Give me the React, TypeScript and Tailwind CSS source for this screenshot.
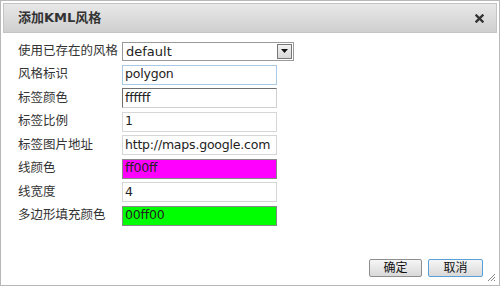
const rows: { label: string; value: string; kind: string }[] = [
  { label: '风格标识', value: 'polygon', kind: 'focus' },
  { label: '标签颜色', value: 'ffffff', kind: 'inset' },
  { label: '标签比例', value: '1', kind: 'plain' },
  { label: '标签图片地址', value: 'http://maps.google.com', kind: 'plain' },
  { label: '线颜色', value: 'ff00ff', kind: 'magenta' },
  { label: '线宽度', value: '4', kind: 'plain' },
  { label: '多边形填充颜色', value: '00ff00', kind: 'green' },
]

const inputStyles: Record<string, string> = {
  focus: 'border border-[#a9c9e6] bg-white',
  inset: 'border border-[#d0d0d0] border-t-[#707070] border-l-[#707070] bg-white',
  plain: 'border border-[#d6d6d6] bg-white',
  magenta: 'border border-[#888] bg-[#ff00ff]',
  green: 'border border-[#888] bg-[#00ff00]',
}

export default function App() {
  return (
    <div className="w-[500px] h-[286px] bg-white border border-[#b8b8b8] p-[2px] flex flex-col font-['DejaVu_Sans','Noto_Sans_CJK_SC',sans-serif] text-[12.5px] text-[#222]">
      {/* title bar */}
      <div className="h-[30px] shrink-0 flex items-center justify-between pl-[14px] pr-[12px] border border-[#c4c4c4] bg-gradient-to-b from-[#e8e8e8] to-[#cfcfcf]">
        <span className="font-bold text-[13px] text-[#333]">添加KML风格</span>
        <svg width="9" height="9" viewBox="0 0 9 9">
          <path d="M1.5 1.5 L7.5 7.5 M7.5 1.5 L1.5 7.5" stroke="#333" strokeWidth="2.4" strokeLinecap="square" />
        </svg>
      </div>

      {/* form */}
      <div className="flex-1 flex flex-col pl-[15px] pt-[8px] gap-[3.5px]">
        <div className="flex items-center h-[20px]">
          <span className="w-[104px] shrink-0 text-[#333]">使用已存在的风格</span>
          <div className="w-[172px] h-[19px] border border-[#999] flex items-center justify-between bg-white">
            <span className="pl-[3px] text-[13px] leading-none">default</span>
            <div className="w-[15px] h-[15px] mr-[1px] border border-[#777] bg-gradient-to-b from-[#f2f2f2] to-[#d8d8d8] flex items-center justify-center">
              <svg width="7" height="4" viewBox="0 0 7 4"><path d="M0 0 H7 L3.5 4 Z" fill="#111" /></svg>
            </div>
          </div>
        </div>
        {rows.map((r) => (
          <div key={r.label} className="flex items-center h-[20px]">
            <span className="w-[104px] shrink-0 text-[#333]">{r.label}</span>
            <div className={`w-[155px] h-[20px] flex items-center overflow-hidden whitespace-nowrap ${inputStyles[r.kind]}`}>
              <span className="pl-[2px] text-[12.5px] tracking-[-0.2px] leading-none">{r.value}</span>
            </div>
          </div>
        ))}
      </div>

      {/* buttons */}
      <div className="relative h-[30px] shrink-0 flex justify-end items-start gap-[6px] pr-[14px] pt-[6px]">
        <button className="w-[53px] h-[18px] border border-[#8e8e8e] rounded-[2px] bg-gradient-to-b from-[#f6f6f6] to-[#d9d9d9] text-[12px] leading-none text-[#111]">确定</button>
        <button className="w-[55px] h-[18px] border border-[#5aa0d8] rounded-[2px] bg-gradient-to-b from-[#f6f6f6] to-[#d9d9d9] text-[12px] leading-none text-[#111]">取消</button>
        <svg className="absolute right-[1px] bottom-[1px]" width="10" height="10" viewBox="0 0 10 10">
          <path d="M9 2 L2 9 M9 5 L5 9 M9 8 L8 9" stroke="#888" strokeWidth="1" />
        </svg>
      </div>
    </div>
  )
}
